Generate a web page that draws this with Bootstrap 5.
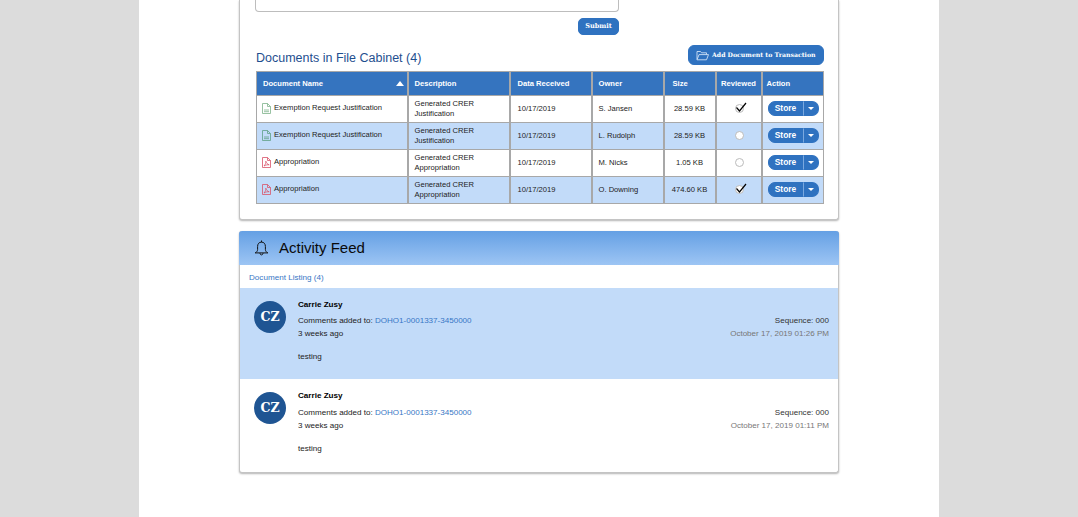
<!DOCTYPE html>
<html lang="en"><head><meta charset="utf-8"><title>Documents</title>
<link href="https://cdn.jsdelivr.net/npm/bootstrap@5.3.0/dist/css/bootstrap.min.css" rel="stylesheet">
<style>
html,body{height:517px;overflow:hidden}
body{background:#dcdcdc;font-family:"Liberation Sans",Arial,sans-serif;color:#111;font-size:8.5px}
.sheet{width:800px;height:517px;margin:0 auto;background:#fff;padding:0 100px}
.panel-a,.panel-b{width:600px;background:#fff;border:1px solid #c4c4c4;box-shadow:0 1px 2px rgba(0,0,0,.3)}
.panel-a{height:220px;border-top:0;border-radius:0 0 3px 3px;padding:0 14px 0 16px}
.stub{width:364px;height:12px;margin-left:-1px;border:1px solid #bdbdbd;border-top:0;border-radius:0 0 4px 4px}
.slab{font-family:"DejaVu Serif","Liberation Serif",serif;font-weight:700;color:#fff}
.btn-blue{background:#2f72c0;border:1px solid #2f72c0;color:#fff;border-radius:5px;padding:0;line-height:1}
.btn-blue:hover{background:#2f72c0;color:#fff}
.submit-wrap{width:364px;margin-left:-1px}
.btn-submit{width:41px;height:17px;font-size:6.6px;margin-top:6px}
.head-row{height:26px;margin-top:10px}
.doc-title{font-size:12.5px;font-weight:400;color:#1f4f8f;margin:0;padding-top:5px;line-height:16px}
.btn-add{width:136px;height:20px;font-size:6.2px;gap:3px;border-radius:6px;padding-left:7px;margin-bottom:6px;white-space:nowrap}
.doc-table{width:567px;table-layout:fixed;border-collapse:collapse;margin:0;font-size:7.6px;color:#222}
.doc-table th,.doc-table td{border:1px solid #a8a8a8;border-width:1px 2px;padding:0 6px;vertical-align:middle;height:27px;line-height:10px}
.doc-table thead th{background:#3574bf;color:#fff;font-weight:700;height:24px;padding-left:6px;position:relative}
.doc-table tr.shade td{background:#c2dbf9}
.doc-table td{background:#fff}
.doc-table th:first-child,.doc-table td:first-child{border-left-width:1px}
.doc-table th:last-child,.doc-table td:last-child{border-right-width:1px}
.sort-up{position:absolute;right:3px;top:9px;width:0;height:0;border:4px solid transparent;border-top:0;border-bottom:5px solid #fff}
.date-cell{padding-left:7px!important}
.size-head{padding-left:8px!important}
.doc-cell{padding-left:5px!important}
.doc-name{gap:3px;margin-bottom:2px}
.tick-cell{padding:0 0 2px 1px!important}
.tick{width:9px;height:9px;border:1px solid #bbb;border-radius:50%;background:#fff;display:inline-block;position:relative;vertical-align:middle}
.tick svg{position:absolute;left:-1px;top:-4px}
.store-cell{padding:0 0 2px 5px!important}
.store-wrap{height:15px}
.btn-store{height:15px;font-size:8.4px;font-weight:700;width:36px;border-radius:7px 0 0 7px}
.btn-caret{height:15px;width:16px;border-radius:0 7px 7px 0;border-left-color:#7aa8df;display:flex;align-items:center;justify-content:center}
.btn-caret i{display:block;width:0;height:0;border:3px solid transparent;border-bottom:0;border-top:3px solid #fff}
.panel-b{margin-top:11px;height:242px;border-radius:3px;border-top:0}
.feed-head{height:34px;margin:0 -1px;background:linear-gradient(#65a0e4,#9dc5f4);border-radius:3px 3px 0 0;padding-left:15px;gap:9px}
.feed-title{font-size:15px;font-weight:400;margin:0 0 0 1px;color:#0a0a0a}
.feed-link{height:23px;padding:3px 0 0 9px;display:flex;align-items:center;font-size:8.1px}
a{color:#3876c5;text-decoration:none}
.feed-item{padding:0 9px 0 14px;gap:12px}
.feed-item.on{background:#c2dbf9;height:91px}
.feed-item.off{height:92px}
.avatar{width:32px;height:32px;background:#1f5593;border-radius:50%;color:#fff;font-family:"DejaVu Serif",serif;font-weight:700;font-size:12.5px;margin-top:13px}
.who{font-weight:700;font-size:8.1px;margin:12px 0 0;line-height:10px;color:#000}
.line{font-size:8.05px;line-height:13px;color:#222}
.l-top{margin-top:4px}
.off .l-top{margin-top:5px}
.l-gap{margin-top:10px}
.meta{font-size:8.05px;line-height:13px;margin-top:26px;text-align:right;color:#333}
.off .meta{margin-top:27px}
.meta span{color:#777}
</style></head><body>
<div class="sheet">
 <div class="panel-a">
  <div class="stub"></div>
  <div class="submit-wrap d-flex justify-content-end"><button class="btn btn-blue slab btn-submit">Submit</button></div>
  <div class="head-row d-flex justify-content-between">
   <h2 class="doc-title">Documents in File Cabinet (4)</h2>
   <button class="btn btn-blue slab btn-add d-flex align-items-center">
    <svg width="13" height="11" viewBox="0 0 13 11" fill="none" stroke="#cfe0f5" stroke-width=".9"><path d="M1 9.5V1.5h3.5l1 1.3H10.5V4.5M1 9.8h9.5L12.5 4.6H3z"/></svg>
    Add Document to Transaction</button>
  </div>
  <table class="doc-table">
   <colgroup><col style="width:151px"><col style="width:102px"><col style="width:82px"><col style="width:72px"><col style="width:52px"><col style="width:46px"><col style="width:62px"></colgroup>
   <thead><tr><th>Document Name<span class="sort-up"></span></th><th>Description</th><th class="date-cell">Data Received</th><th>Owner</th><th class="size-head">Size</th><th class="text-center px-0">Reviewed</th><th class="px-1">Action</th></tr></thead>
   <tbody>
    <tr><td class="doc-cell"><div class="doc-name d-flex align-items-center"><svg width="9" height="11" viewBox="0 0 9 11" fill="none" stroke="#7db28a" stroke-width=".8"><path d="M.5.5H5.5L8.5 3.5V10.5H.5zM5.5.5V3.5H8.5M2 7H7M2 8.7H7"/></svg><span>Exemption Request Justification</span></div></td><td>Generated CRER Justification</td><td class="date-cell">10/17/2019</td><td>S. Jansen</td><td class="text-center px-0">28.59 KB</td><td class="text-center tick-cell"><span class="tick"><svg width="12" height="12" viewBox="0 0 12 12" fill="none" stroke="#000" stroke-width="1.2"><path d="M1.5 6.5L4.5 10L11 2"/></svg></span></td><td class="store-cell"><div class="btn-group store-wrap"><button class="btn btn-blue btn-store">Store</button><button class="btn btn-blue btn-caret" aria-label="More"><i></i></button></div></td></tr>
    <tr class="shade"><td class="doc-cell"><div class="doc-name d-flex align-items-center"><svg width="9" height="11" viewBox="0 0 9 11" fill="none" stroke="#5f9f86" stroke-width=".8"><path d="M.5.5H5.5L8.5 3.5V10.5H.5zM5.5.5V3.5H8.5M2 7H7M2 8.7H7"/></svg><span>Exemption Request Justification</span></div></td><td>Generated CRER Justification</td><td class="date-cell">10/17/2019</td><td>L. Rudolph</td><td class="text-center px-0">28.59 KB</td><td class="text-center tick-cell"><span class="tick"></span></td><td class="store-cell"><div class="btn-group store-wrap"><button class="btn btn-blue btn-store">Store</button><button class="btn btn-blue btn-caret" aria-label="More"><i></i></button></div></td></tr>
    <tr><td class="doc-cell"><div class="doc-name d-flex align-items-center"><svg width="9" height="11" viewBox="0 0 9 11" fill="none" stroke="#d9536a" stroke-width=".8"><path d="M.5.5H5.5L8.5 3.5V10.5H.5zM5.5.5V3.5H8.5M2 9C3.5 7.5 4 5.5 3.8 4.2C4.5 6 5.5 7.5 7.2 7.8C5.5 7.6 3.8 8 2 9z"/></svg><span>Appropriation</span></div></td><td>Generated CRER Appropriation</td><td class="date-cell">10/17/2019</td><td>M. Nicks</td><td class="text-center px-0">1.05 KB</td><td class="text-center tick-cell"><span class="tick"></span></td><td class="store-cell"><div class="btn-group store-wrap"><button class="btn btn-blue btn-store">Store</button><button class="btn btn-blue btn-caret" aria-label="More"><i></i></button></div></td></tr>
    <tr class="shade"><td class="doc-cell"><div class="doc-name d-flex align-items-center"><svg width="9" height="11" viewBox="0 0 9 11" fill="none" stroke="#d9536a" stroke-width=".8"><path d="M.5.5H5.5L8.5 3.5V10.5H.5zM5.5.5V3.5H8.5M2 9C3.5 7.5 4 5.5 3.8 4.2C4.5 6 5.5 7.5 7.2 7.8C5.5 7.6 3.8 8 2 9z"/></svg><span>Appropriation</span></div></td><td>Generated CRER Appropriation</td><td class="date-cell">10/17/2019</td><td>O. Downing</td><td class="text-center px-0">474.60 KB</td><td class="text-center tick-cell"><span class="tick"><svg width="12" height="12" viewBox="0 0 12 12" fill="none" stroke="#000" stroke-width="1.2"><path d="M1.5 6.5L4.5 10L11 2"/></svg></span></td><td class="store-cell"><div class="btn-group store-wrap"><button class="btn btn-blue btn-store">Store</button><button class="btn btn-blue btn-caret" aria-label="More"><i></i></button></div></td></tr>
   </tbody>
  </table>
 </div>
 <div class="panel-b">
  <div class="feed-head d-flex align-items-center">
   <svg width="15" height="18" viewBox="0 0 15 17" fill="none" stroke="#111" stroke-width="1"><path d="M7.5 2.6C5 2.6 3.6 4.4 3.6 7V10C3.6 11.5 2.6 12.6 1.2 13.4H13.8C12.4 12.6 11.4 11.5 11.4 10V7C11.4 4.4 10 2.6 7.5 2.6zM7.5 2.6V1M6 13.6C6 16 9 16 9 13.6"/></svg>
   <h2 class="feed-title">Activity Feed</h2>
  </div>
  <div class="feed-link"><a href="#">Document Listing (4)</a></div>
  <div class="feed-item on d-flex">
   <div class="avatar d-flex align-items-center justify-content-center flex-shrink-0">CZ</div>
   <div class="flex-grow-1"><p class="who">Carrie Zusy</p><div class="line l-top">Comments added to: <a href="#">DOHO1-0001337-3450000</a></div><div class="line">3 weeks ago</div><div class="line l-gap">testing</div></div>
   <div class="meta">Sequence: 000<br><span>October 17, 2019 01:26 PM</span></div>
  </div>
  <div class="feed-item off d-flex">
   <div class="avatar d-flex align-items-center justify-content-center flex-shrink-0">CZ</div>
   <div class="flex-grow-1"><p class="who">Carrie Zusy</p><div class="line l-top">Comments added to: <a href="#">DOHO1-0001337-3450000</a></div><div class="line">3 weeks ago</div><div class="line l-gap">testing</div></div>
   <div class="meta">Sequence: 000<br><span>October 17, 2019 01:11 PM</span></div>
  </div>
 </div>
</div>
<script src="https://cdn.jsdelivr.net/npm/bootstrap@5.3.0/dist/js/bootstrap.bundle.min.js"></script>
</body></html>
